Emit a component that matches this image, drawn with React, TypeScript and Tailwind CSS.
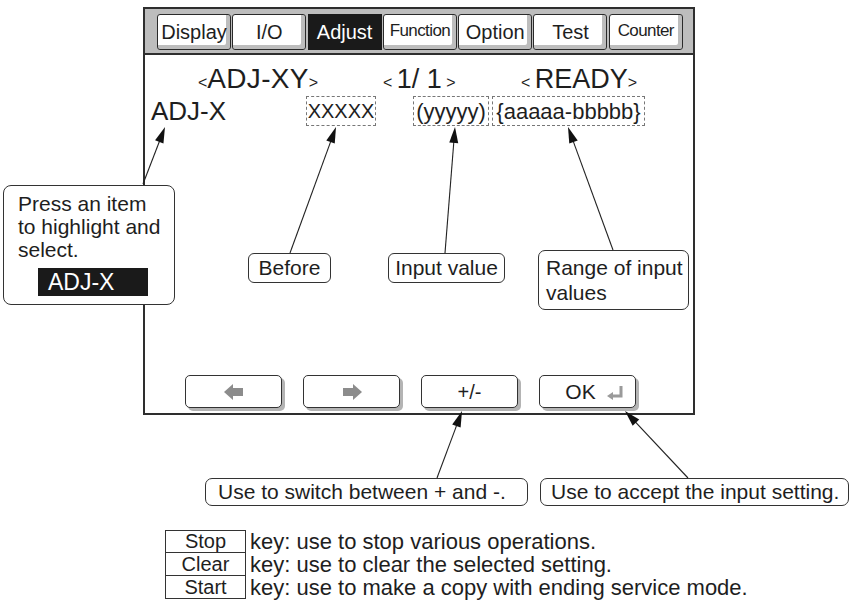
import React from "react";

const arrows: [number, number, number, number][] = [
  [143, 184, 165, 127],
  [290, 253, 336, 127],
  [445, 253, 455, 127],
  [613, 250, 568, 127],
  [437, 478, 462, 411],
  [688, 478, 625, 411],
];

function Arrow({ a }: { a: [number, number, number, number] }) {
  const [x1, y1, x2, y2] = a;
  const dx = x2 - x1;
  const dy = y2 - y1;
  const L = Math.hypot(dx, dy);
  const ux = dx / L;
  const uy = dy / L;
  const hl = 16;
  const hw = 4.5;
  const bx = x2 - ux * hl;
  const by = y2 - uy * hl;
  const px = -uy;
  const py = ux;
  return (
    <g>
      <line x1={x1} y1={y1} x2={bx + ux * 2} y2={by + uy * 2} stroke="#222" strokeWidth={1.1} />
      <polygon
        points={`${x2},${y2} ${bx + px * hw},${by + py * hw} ${bx - px * hw},${by - py * hw}`}
        fill="#111"
      />
    </g>
  );
}

function Tab({ label, active, small }: { label: string; active?: boolean; small?: boolean }) {
  if (active) {
    return (
      <div className="w-[74px] h-[36px] bg-[#1a1a1a] text-white flex items-center justify-center text-[20px]">
        {label}
      </div>
    );
  }
  return (
    <div
      className={`w-[74px] h-[36px] bg-white border-[1.5px] border-[#2a2a2a] rounded-[3px] shadow-[inset_-4px_-4px_0_#bdbdbd] flex items-center justify-center ${
        small ? "text-[17px] tracking-[-0.6px] pb-[3px]" : "text-[20px]"
      }`}
    >
      {label}
    </div>
  );
}

function Btn({ children }: { children: React.ReactNode }) {
  return (
    <div className="w-[97px] h-[33px] bg-white border border-[#333] rounded-[5px] shadow-[3px_3px_0_#b4b4b4] flex items-center justify-center text-[20px]">
      {children}
    </div>
  );
}

export default function App() {
  return (
    <div className="relative w-[852px] h-[605px] bg-white text-[#1e1e1e] font-['Liberation_Sans',Arial,sans-serif] overflow-hidden">
      <div className="pt-[7px] pl-[143px]">
        <div className="w-[552px] h-[408px] border-2 border-[#2e2e2e] flex flex-col">
          <div className="h-[46px] bg-[#bdbdbd] border-b-2 border-[#2e2e2e] flex items-start pt-[5px] pl-[12px] gap-[1.3px]">
            <Tab label="Display" />
            <Tab label="I/O" />
            <Tab label="Adjust" active />
            <Tab label="Function" small />
            <Tab label="Option" />
            <Tab label="Test" />
            <Tab label="Counter" small />
          </div>
          <div className="flex items-baseline mt-[3px] h-[30px]">
            <div className="ml-[53px] w-[136px] flex items-baseline">
              <span className="text-[16px]">&lt;</span>
              <span className="text-[28px] tracking-[0.3px]">ADJ-XY</span>
              <span className="text-[16px]">&gt;</span>
            </div>
            <div className="ml-[49px] w-[88px] flex items-baseline">
              <span className="text-[16px]">&lt;&nbsp;</span>
              <span className="text-[27px]">1/ 1</span>
              <span className="text-[16px]">&nbsp;&gt;</span>
            </div>
            <div className="ml-[50px] flex items-baseline">
              <span className="text-[16px]">&lt;&nbsp;</span>
              <span className="text-[27px]">READY</span>
              <span className="text-[16px]">&gt;</span>
            </div>
          </div>
          <div className="flex items-center mt-[8px] h-[30px]">
            <span className="ml-[6px] text-[26px] w-[155px]">ADJ-X</span>
            <span className="border border-dashed border-[#777] h-[30px] w-[70px] justify-center flex items-center text-[20px]">
              XXXXX
            </span>
            <span className="ml-[37px] border border-dashed border-[#777] h-[30px] w-[76px] justify-center flex items-center text-[22px]">
              (yyyyy)
            </span>
            <span className="ml-[3px] border border-dashed border-[#777] h-[30px] w-[153px] justify-center flex items-center text-[22px]">
              {"{aaaaa-bbbbb}"}
            </span>
          </div>
          <div className="flex-1" />
          <div className="flex pl-[40px] gap-[21px] pb-[5px]">
            <Btn>
              <svg width="20" height="16" viewBox="0 0 20 16">
                <polygon points="0,8 9,0 9,4 19,4 19,12 9,12 9,16" fill="#8c8c8c" />
              </svg>
            </Btn>
            <Btn>
              <svg width="20" height="16" viewBox="0 0 20 16">
                <polygon points="20,8 11,0 11,4 1,4 1,12 11,12 11,16" fill="#8c8c8c" />
              </svg>
            </Btn>
            <Btn>+/-</Btn>
            <Btn>
              <span className="ml-[14px] text-[21px]">OK</span>
              <svg width="18" height="16" viewBox="0 0 18 16" className="ml-[10px]">
                <path d="M15 2 V12 H6" stroke="#9a9a9a" strokeWidth="3" fill="none" />
                <polygon points="1,12 7,8 7,16" fill="#9a9a9a" />
              </svg>
            </Btn>
          </div>
        </div>
      </div>

      <div className="flex mt-[63px] h-[28px]">
        <div className="ml-[205px] w-[323px] h-[28px] border border-[#333] rounded-[7px] flex items-center pl-[12px] text-[21px]">
          Use to switch between + and -.
        </div>
        <div className="ml-[12px] w-[309px] h-[28px] border border-[#333] rounded-[7px] flex items-center pl-[10px] text-[21px]">
          Use to accept the input setting.
        </div>
      </div>

      <div className="mt-[24px] ml-[165px] flex flex-col leading-[23px]">
        {[
          ["Stop", "key: use to stop various operations."],
          ["Clear", "key: use to clear the selected setting."],
          ["Start", "key: use to make a copy with ending service mode."],
        ].map(([k, d], i) => (
          <div key={k} className="flex items-center">
            <div
              className={`w-[81px] h-[23px] border border-[#333] flex items-center justify-center text-[20px] ${
                i > 0 ? "border-t-0 h-[22px]" : ""
              }`}
            >
              {k}
            </div>
            <span className="ml-[4px] text-[22px]">{d}</span>
          </div>
        ))}
      </div>

      {/* annotation callouts */}
      <div className="absolute left-[3px] top-[185px] w-[172px] h-[120px] bg-white border border-[#333] rounded-[8px] pl-[14px] pt-[6px] text-[21px] leading-[23px]">
        <div>Press an item</div>
        <div>to highlight and</div>
        <div>select.</div>
        <div className="mt-[7px] ml-[20px] w-[110px] h-[28px] bg-[#1a1a1a] text-white text-[23px] leading-[28px] pl-[10px]">
          ADJ-X
        </div>
      </div>
      <div className="absolute left-[248px] top-[253px] w-[83px] h-[30px] bg-white border border-[#333] rounded-[6px] flex items-center justify-center text-[21px]">
        Before
      </div>
      <div className="absolute left-[388px] top-[253px] w-[117px] h-[30px] bg-white border border-[#333] rounded-[6px] flex items-center justify-center text-[21px]">
        Input value
      </div>
      <div className="absolute left-[538px] top-[250px] w-[151px] h-[60px] bg-white border border-[#333] rounded-[7px] pl-[7px] pt-[4px] text-[21px] leading-[25px]">
        <div>Range of input</div>
        <div>values</div>
      </div>

      <svg className="absolute inset-0 pointer-events-none" width="852" height="605">
        {arrows.map((a, i) => (
          <Arrow key={i} a={a} />
        ))}
      </svg>
    </div>
  );
}
